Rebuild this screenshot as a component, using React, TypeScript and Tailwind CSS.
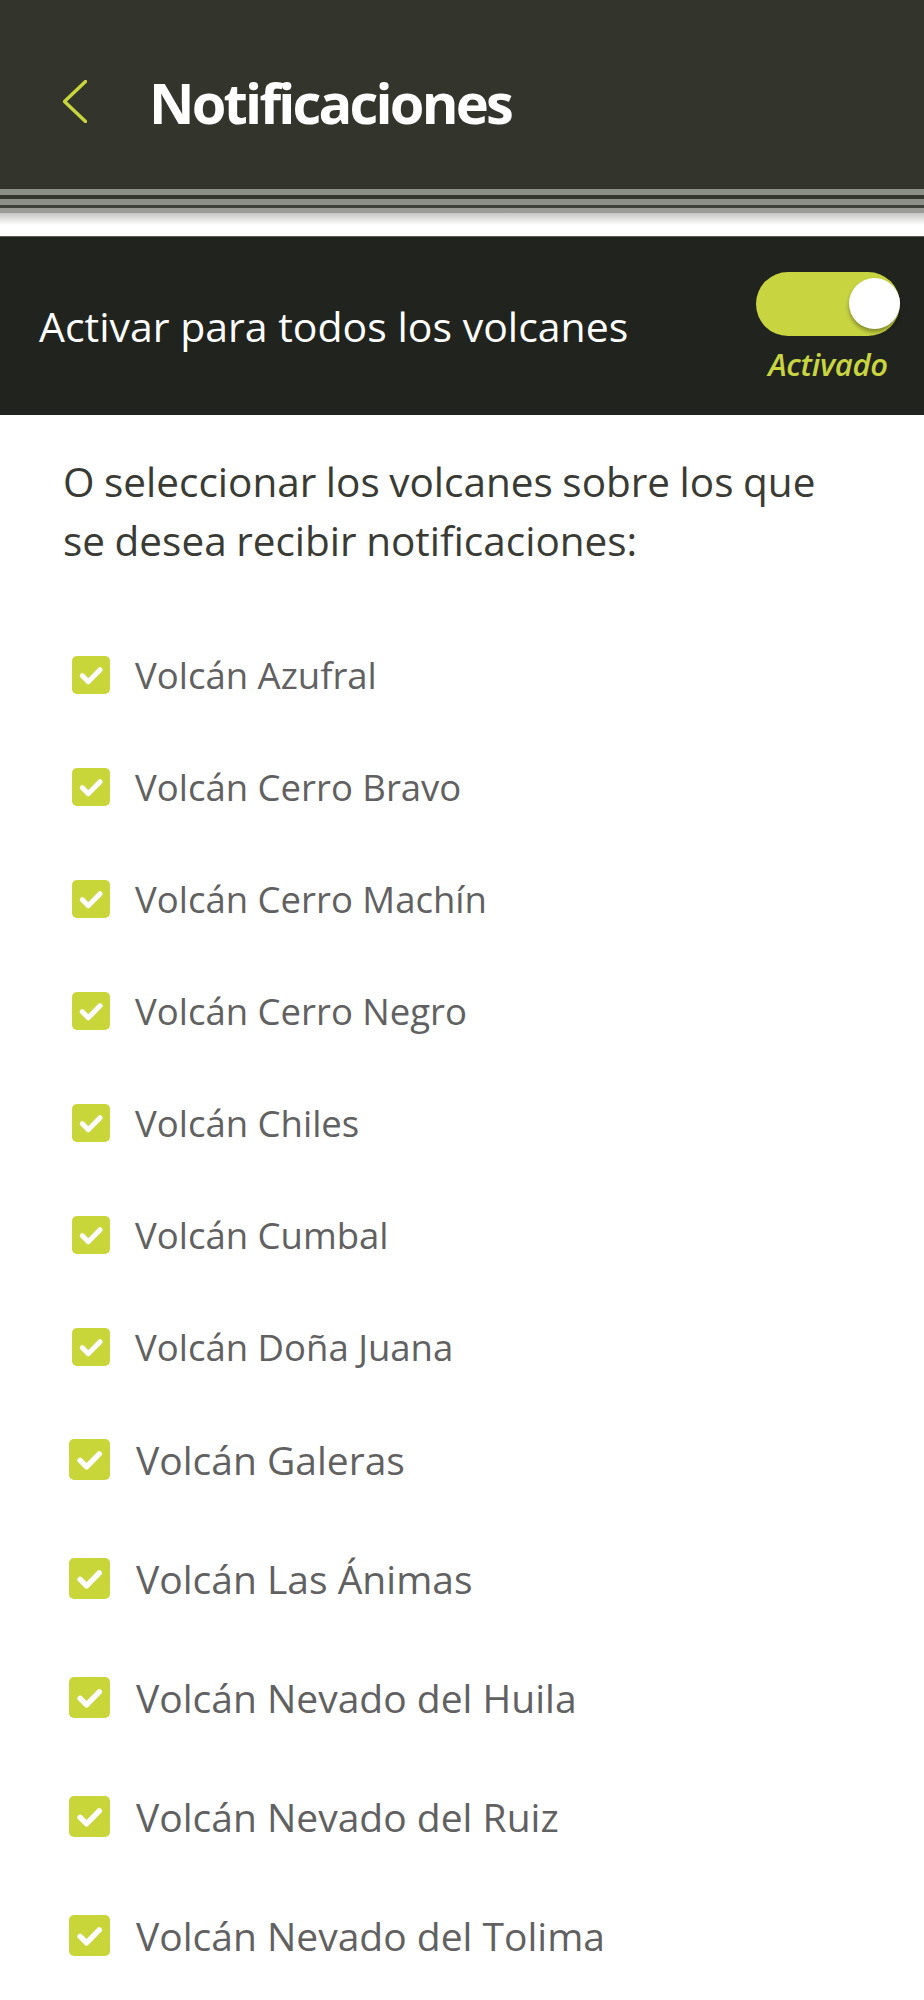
import React from "react";

const firstGroup = [
  "Volcán Azufral",
  "Volcán Cerro Bravo",
  "Volcán Cerro Machín",
  "Volcán Cerro Negro",
  "Volcán Chiles",
  "Volcán Cumbal",
  "Volcán Doña Juana",
];

const secondGroup = [
  "Volcán Galeras",
  "Volcán Las Ánimas",
  "Volcán Nevado del Huila",
  "Volcán Nevado del Ruiz",
  "Volcán Nevado del Tolima",
];

const CheckIcon: React.FC = () => (
  <svg viewBox="0 0 24 24" className="w-full h-full" fill="none">
    <path d="M6.5 12.5l3.8 3.8 7.4-7.6" stroke="#ffffff" strokeWidth="3.2" strokeLinecap="round" strokeLinejoin="round" />
  </svg>
);

export default function App() {
  return (
    <div className="w-[924px] min-h-[2000px] bg-white font-['Open_Sans',sans-serif]">
      {/* top bar */}
      <header className="bg-[#33352d] h-[189px] flex items-center pl-[63px] pt-[14px]">
        <svg width="24" height="43" viewBox="0 0 24 43" fill="none">
          <polyline points="22.5,1.5 1.5,21.5 22.5,41.5" stroke="#c6d63c" strokeWidth="3.4" strokeLinecap="round" strokeLinejoin="round" />
        </svg>
        <h1 className="ml-[62px] text-white text-[56px] leading-none font-bold tracking-[-0.05em]">
          Notificaciones
        </h1>
      </header>
      <div className="h-[6px] bg-[#8d8f89]" />
      <div className="h-[4px] bg-[#33352d]" />
      <div className="h-[6px] bg-[#8d8f89]" />
      <div className="h-[3px] bg-[#3e4039]" />
      <div className="h-[5px] bg-[#9a9b96]" />
      <div className="h-[12px] bg-linear-to-b from-[#c4c5c2] to-white" />
      <div className="h-[11px] bg-white" />
      <div className="h-[1px] bg-[#5b5c57]" />

      {/* activate all */}
      <section className="bg-[#21231e] h-[178px] flex items-center justify-between pl-[39px] pr-[24px]">
        <span className="text-white text-[41px] leading-none">Activar para todos los volcanes</span>
        <div className="flex flex-col items-center">
          <div className="relative w-[144px] h-[64px] rounded-full bg-[#c8d541]">
            <div className="absolute top-[6px] right-0 w-[51px] h-[51px] rounded-full bg-white shadow-[0_3px_4px_rgba(0,0,0,0.35)]" />
          </div>
          <span className="mt-[13px] text-[31px] leading-none italic font-semibold tracking-[-0.01em] text-[#c8d541]">Activado</span>
        </div>
      </section>

      <p className="mt-[37px] pl-[63px] pr-[66px] text-[40.5px] leading-[59px] [word-spacing:-1px] text-[#393b34]">
        O seleccionar los volcanes sobre los que se desea recibir notificaciones:
      </p>

      <ul className="mt-[49px]">
        {firstGroup.map((name) => (
          <li key={name} className="h-[112px] flex items-center pl-[72px]">
            <span className="w-[38px] h-[38px] rounded-[5px] bg-[#c8d63a] flex items-center justify-center shrink-0">
              <CheckIcon />
            </span>
            <span className="ml-[25px] text-[36.5px] leading-none text-[#616161]">{name}</span>
          </li>
        ))}
      </ul>
      <ul className="-mt-[3px]">
        {secondGroup.map((name) => (
          <li key={name} className="h-[119px] flex items-center pl-[69px]">
            <span className="w-[41px] h-[41px] rounded-[5px] bg-[#c8d63a] flex items-center justify-center shrink-0">
              <CheckIcon />
            </span>
            <span className="ml-[26px] text-[39px] leading-none text-[#616161]">{name}</span>
          </li>
        ))}
      </ul>
    </div>
  );
}
